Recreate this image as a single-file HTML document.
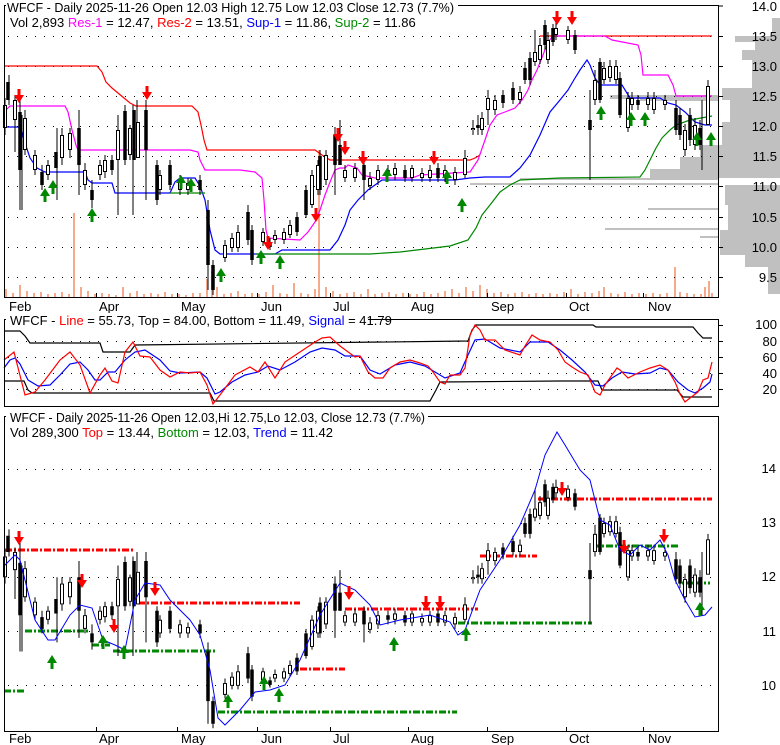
<!DOCTYPE html>
<html><head><meta charset="utf-8"><style>
html,body{margin:0;padding:0;background:#fff;}
svg{display:block;font-family:"Liberation Sans",Arial,sans-serif;font-size:13px;}
</style></head><body>
<svg width="780" height="745" viewBox="0 0 780 745" xmlns="http://www.w3.org/2000/svg">
<defs>
<path id="dn" d="M-1.5,-14 h3 v6 h3.5 l-5,8 l-5,-8 h3.5 z" fill="#f00"/>
<path id="up" d="M-1.5,14 h3 v-6 h3.5 l-5,-8 l-5,8 h3.5 z" fill="#080"/>
<g id="candles">
<path fill="none" stroke="#000" stroke-width="1" d="M20,90V210M22,115V210M57,128V200M79,110V195M118,115V215M133,105V215M137,100V125M146,100V200M208,200V290M213,260V295M335,127V195M340,120V165M364,160V200M590,90V180M702,100V170M708,80V125M5,98V135M9,75V105M15,95V152M25,110V155M35,150V175M42,165V190M48,160V180M62,128V165M70,128V158M85,163V190M92,180V208M100,160V180M105,155V178M112,155V175M125,105V165M130,125V160M157,160V205M160,170V195M170,160V190M180,175V195M188,178V195M200,175V195M225,240V262M232,233V252M238,225V252M248,205V245M252,225V265M263,228V246M270,238V250M275,230V244M284,228V244M290,220V238M297,212V236M306,185V218M312,170V208M318,160V195M320,150V195M326,150V185M345,165V182M355,163V182M370,172V190M378,165V185M388,165V180M395,163V180M405,165V182M412,165V182M422,168V182M430,165V182M438,163V182M445,165V182M455,167V185M465,150V178M473,120V135M478,115V135M482,112V135M488,90V125M495,95V115M503,90V108M513,82V104M520,86V104M525,62V84M530,52V85M535,30V66M540,38V64M545,20V50M548,32V64M553,24V46M556,20V40M568,26V44M575,30V54M595,70V105M600,58V103M604,62V84M610,60V82M616,60V84M620,72V118M628,92V132M632,92V110M638,95V110M648,92V110M654,92V114M665,95V110M676,100V135M680,108V140M685,124V156M690,108V146M695,118V150M700,120V150"/>
<path fill="none" stroke="#000" stroke-width="3.5" d="M8,82V100M20,112V170M42,172V185M56,152V168M79,128V165M92,190V200M112,160V170M125,111V160M134,110V160M146,110V150M157,165V200M170,165V185M200,180V190M208,210V265M213,265V290M248,212V240M252,230V260M270,242V247M297,217V232M306,190V215M320,156V190M335,135V165M340,145V165M364,165V180M388,170V175M405,170V178M438,168V178M478,125V128M503,95V103M513,88V100M525,68V80M530,58V80M545,25V45M553,28V42M575,35V50M590,120V130M600,62V100M620,78V115M638,100V105M676,108V130M680,115V135M690,115V140M700,128V145"/>
<path fill="none" stroke="#000" stroke-width="4" d="M5,105V128M15,100V120M25,118V150M35,155V170M48,165V175M62,135V158M70,133V150M85,170V185M100,165V175M105,160V172M118,130V160M130,128V155M138,122V158M160,175V190M180,180V190M188,183V190M225,245V258M232,238V248M238,232V248M263,232V242M275,235V240M284,232V240M290,225V235M312,175V205M318,165V190M326,155V180M345,170V178M355,168V178M370,178V186M378,170V180M395,168V175M412,168V178M422,173V178M430,170V178M445,170V178M455,172V180M465,158V175M473,128V130M482,118V130M488,98V110M495,100V110M520,92V100M535,52V62M540,45V60M548,40V60M556,28V35M568,30V40M595,80V100M604,68V80M610,66V78M616,66V80M628,98V128M632,98V105M648,98V105M654,98V110M665,100V105M685,130V150M695,125V145M708,86V125"/>
<path fill="none" stroke="#fff" stroke-width="2" d="M5,106V127M15,101V119M25,119V149M35,156V169M48,166V174M62,136V157M70,134V149M85,171V184M100,166V174M105,161V171M118,131V159M130,129V154M138,123V157M160,176V189M180,181V189M188,184V189M225,246V257M232,239V247M238,233V247M263,233V241M275,236V239M284,233V239M290,226V234M312,176V204M318,166V189M326,156V179M345,171V177M355,169V177M370,179V185M378,171V179M395,169V174M412,169V177M422,174V177M430,171V177M445,171V177M455,173V179M465,159V174M473,129V129.5M482,119V129M488,99V109M495,101V109M520,93V99M535,53V61M540,46V59M548,41V59M556,29V34M568,31V39M595,81V99M604,69V79M610,67V77M616,67V79M628,99V127M632,99V104M648,99V104M654,99V109M665,101V104M685,131V149M695,126V144M708,87V124"/>
</g>
</defs>

<!-- ===== PANEL 1 ===== -->
<g>
<!-- volume profile -->
<g fill="#c0c0c0">
<rect x="772" y="18" width="8" height="18"/><rect x="735" y="36" width="45" height="6"/><rect x="755" y="42" width="25" height="8"/><rect x="742" y="50" width="38" height="10"/>
<rect x="752" y="60" width="28" height="28"/><rect x="722" y="88" width="58" height="12"/><rect x="610" y="95" width="109" height="4"/><rect x="640" y="99" width="79" height="2"/>
<rect x="730" y="100" width="50" height="22"/><rect x="722" y="122" width="58" height="23"/><rect x="700" y="145" width="80" height="12"/>
<rect x="680" y="157" width="100" height="12"/><rect x="650" y="169" width="130" height="9"/><rect x="520" y="178" width="199" height="2"/><rect x="470" y="183" width="249" height="2"/>
<rect x="725" y="185" width="55" height="20"/><rect x="648" y="208" width="71" height="2"/><rect x="728" y="205" width="52" height="25"/><rect x="605" y="228" width="114" height="2"/>
<rect x="720" y="230" width="60" height="25"/><rect x="700" y="236" width="19" height="2"/><rect x="745" y="255" width="35" height="12"/><rect x="768" y="267" width="12" height="27"/>
</g>
<!-- volume bars -->
<path fill="none" stroke="#f7a98b" stroke-width="2" d="M6,297v-8M13,297v-4M20,297v-12M27,297v-6M34,297v-4M41,297v-5M48,297v-3M55,297v-4M62,297v-5M69,297v-3M74,297v-84M81,297v-10M88,297v-6M95,297v-3M102,297v-4M109,297v-3M116,297v-2M123,297v-10M130,297v-4M137,297v-6M144,297v-3M151,297v-4M158,297v-3M165,297v-5M172,297v-3M179,297v-3M186,297v-2M193,297v-4M200,297v-4M207,297v-18M212,297v-25M217,297v-10M224,297v-3M231,297v-4M238,297v-6M245,297v-3M252,297v-4M259,297v-3M266,297v-5M273,297v-12M280,297v-4M287,297v-3M294,297v-14M301,297v-4M308,297v-3M315,297v-8M319,297v-147M326,297v-10M333,297v-6M340,297v-3M347,297v-4M354,297v-5M361,297v-3M368,297v-8M375,297v-3M382,297v-4M389,297v-5M396,297v-3M403,297v-4M410,297v-3M417,297v-3M424,297v-5M431,297v-3M438,297v-4M445,297v-6M452,297v-8M459,297v-4M466,297v-10M473,297v-6M480,297v-12M487,297v-8M494,297v-4M501,297v-5M508,297v-3M515,297v-4M522,297v-5M529,297v-3M536,297v-4M543,297v-3M550,297v-4M557,297v-3M564,297v-5M571,297v-8M578,297v-3M585,297v-5M592,297v-4M599,297v-6M604,297v-10M611,297v-4M618,297v-3M625,297v-5M632,297v-3M639,297v-4M646,297v-3M653,297v-4M660,297v-3M667,297v-4M675,297v-30M680,297v-5M687,297v-4M694,297v-3M701,297v-3M705,297v-10M709,297v-16M712,297v-4"/>
<path stroke="#000" stroke-width="1" stroke-dasharray="1,8" fill="none" d="M8,36.5H719M8,66.5H719M8,96.5H719M8,126.5H719M8,156.5H719M8,186.5H719M8,217.5H719M8,247.5H719M8,277.5H719"/>
<polyline fill="none" stroke="#f00" stroke-width="1.2" points="4,66 97,66 102,72 106,82 112,88 118,93 124,98 130,103 136,106 192,106 198,112 201,125 204,140 207,150 315,150 322,155 330,160 340,160 470,160 475,158 480,155"/>
<polyline fill="none" stroke="#f00" stroke-width="1.2" points="540,36 712,36"/>
<polyline fill="none" stroke="#f0f" stroke-width="1.2" points="6,110 10,106 65,106 68,112 72,130 76,145 78,150 190,150 198,152 200,160 205,170 240,170 255,172 262,178 264,200 266,230 268,238 300,240 308,232 315,222 320,210 325,195 330,182 335,170 340,168 345,168 348,165 357,168 362,175 375,178 412,178 420,175 470,172 478,160 485,140 490,125 497,115 505,112 515,108 522,100 528,90 532,80 537,70 543,55 548,42 553,36 605,36 612,40 638,45 641,55 643,75 668,75 673,85 676,96 712,96"/>
<polyline fill="none" stroke="#00f" stroke-width="1.2" points="4,127 21,127 24,140 30,158 37,168 45,172 85,172 88,180 92,183 112,183 115,193 170,193 175,182 180,178 195,178 200,186 205,200 210,230 215,250 220,254 275,254 282,250 330,250 338,240 345,225 350,210 358,200 368,190 375,185 382,180 455,180 470,178 485,177 510,177 520,168 530,155 540,135 550,112 560,100 568,90 575,78 580,70 587,60 590,65 595,78 600,85 622,85 630,98 660,98 668,103 676,105 685,112 695,122 705,125 712,125"/>
<polyline fill="none" stroke="#080" stroke-width="1.2" points="170,193 205,193"/>
<polyline fill="none" stroke="#080" stroke-width="1.2" points="255,254 370,254 400,252 450,246 468,240 476,228 482,215 490,205 500,192 510,185 520,180 560,178 640,177 645,170 650,160 656,148 662,138 670,130 676,125 690,120 712,116"/>
<use href="#candles"/>
<g>
<use href="#dn" x="19" y="103"/><use href="#dn" x="147" y="100"/><use href="#dn" x="268" y="250"/><use href="#dn" x="316" y="222"/><use href="#dn" x="338" y="142"/><use href="#dn" x="345" y="155"/><use href="#dn" x="363" y="165"/><use href="#dn" x="434" y="165"/><use href="#dn" x="557" y="25"/><use href="#dn" x="572" y="25"/>
<use href="#up" x="45" y="188"/><use href="#up" x="53" y="180"/><use href="#up" x="92" y="208"/><use href="#up" x="181" y="175"/><use href="#up" x="191" y="178"/><use href="#up" x="221" y="268"/><use href="#up" x="261" y="250"/><use href="#up" x="280" y="255"/><use href="#up" x="387" y="168"/><use href="#up" x="447" y="170"/><use href="#up" x="462" y="198"/><use href="#up" x="601" y="106"/><use href="#up" x="631" y="112"/><use href="#up" x="645" y="112"/><use href="#up" x="697" y="132"/><use href="#up" x="711" y="132"/>
</g>
<rect x="4.5" y="5.5" width="714" height="292" fill="none" stroke="#000"/>
<rect x="6" y="0" width="452" height="14" fill="#fff"/>
<text x="7" y="12" textLength="447" lengthAdjust="spacingAndGlyphs">WFCF - Daily 2025-11-26 Open 12.03  High 12.75  Low 12.03  Close 12.73 (7.7%)</text>
<text x="10" y="27">Vol 2,893 <tspan fill="#f0f">Res-1</tspan> = 12.47, <tspan fill="#f00">Res-2</tspan> = 13.51, <tspan fill="#00f">Sup-1</tspan> = 11.86, <tspan fill="#080">Sup-2</tspan> = 11.86</text>
<path stroke="#000" d="M719,6h4M719,36.5h4M719,66.5h4M719,96.5h4M719,126.5h4M719,156.5h4M719,186.5h4M719,217.5h4M719,247.5h4M719,277.5h4"/>
<g text-anchor="end">
<text x="777" y="11">14.0</text><text x="777" y="41">13.5</text><text x="777" y="71">13.0</text><text x="777" y="101">12.5</text><text x="777" y="131">12.0</text><text x="777" y="161">11.5</text><text x="777" y="191">11.0</text><text x="777" y="222">10.5</text><text x="777" y="252">10.0</text><text x="777" y="282">9.5</text>
</g>
<path stroke="#000" d="M96.5,298v-5M177.5,298v-5M257.5,298v-5M330.5,298v-5M408.5,298v-5M487.5,298v-5M566.5,298v-5M643.5,298v-5"/>
<g><text x="9" y="311">Feb</text><text x="99" y="311">Apr</text><text x="181" y="311">May</text><text x="261" y="311">Jun</text><text x="333" y="311">Jul</text><text x="411" y="311">Aug</text><text x="491" y="311">Sep</text><text x="569" y="311">Oct</text><text x="648" y="311">Nov</text></g>
</g>

<!-- ===== PANEL 2 ===== -->
<g>
<path stroke="#000" stroke-width="1" stroke-dasharray="1,8" fill="none" d="M8,341.5H719M8,357.5H719M8,373.5H719M8,389.5H719"/>
<polyline fill="none" stroke="#000" stroke-width="1.2" points="4,331 20,331 25,336 30,343 100,343 103,352 130,352 135,345 468,341 472,330 476,325 593,325 596,327 693,327 698,333 703,338 712,338"/>
<polyline fill="none" stroke="#000" stroke-width="1.2" points="4,381 24,381 28,390 32,393 210,393 214,401 430,401 436,390 440,382 560,381 598,381 602,390 677,390 683,397 712,397"/>
<polyline fill="none" stroke="#00f" stroke-width="1.2" points="4,368 10,360 15,358 20,364 28,380 38,386 50,385 60,375 70,364 80,362 88,370 95,380 100,380 108,372 115,372 125,360 135,352 145,350 160,360 170,371 180,373 200,372 207,378 215,394 220,392 232,382 245,375 258,372 268,366 280,370 295,362 310,352 322,348 335,350 345,356 360,356 370,370 380,374 395,365 410,362 425,366 435,372 445,378 460,373 468,355 475,340 485,339 500,348 520,352 530,342 548,342 560,350 572,360 585,372 595,385 603,386 612,378 622,372 635,374 650,373 660,368 668,370 678,382 688,390 695,393 703,388 710,382 712,374"/>
<polyline fill="none" stroke="#f00" stroke-width="1.2" points="4,360 14,352 25,395 35,392 45,380 60,360 70,352 80,365 90,393 100,375 105,368 112,381 118,383 125,352 133,342 140,356 150,357 160,370 170,377 180,372 190,373 200,372 207,385 213,404 220,395 235,375 250,367 258,372 265,362 275,378 285,362 300,352 315,342 322,338 330,337 340,346 355,357 360,356 368,372 375,378 383,378 390,368 400,362 410,360 420,363 428,366 433,372 440,382 445,384 450,375 460,375 465,368 470,335 475,325 480,330 485,340 495,340 505,350 520,355 525,346 532,335 540,340 550,342 558,350 565,362 572,367 580,372 588,375 595,392 600,395 605,385 612,375 617,368 620,370 628,378 640,372 650,368 660,365 668,370 675,382 680,394 685,402 690,398 698,392 703,380 708,378 712,362"/>
<rect x="4.5" y="319.5" width="714" height="87" fill="none" stroke="#000"/>
<rect x="6" y="313" width="362" height="14" fill="#fff"/>
<text x="10" y="325">WFCF - <tspan fill="#f00">Line</tspan> = 55.73, Top = 84.00, Bottom = 11.49, <tspan fill="#00f">Signal</tspan> = 41.79</text>
<path stroke="#000" d="M719,325.5h4M719,341.5h4M719,357.5h4M719,373.5h4M719,389.5h4"/>
<g text-anchor="end"><text x="777" y="329">100</text><text x="777" y="346">80</text><text x="777" y="362">60</text><text x="777" y="378">40</text><text x="777" y="394">20</text></g>
</g>

<!-- ===== PANEL 3 ===== -->
<g>
<path stroke="#000" stroke-width="1" stroke-dasharray="1,8" fill="none" d="M8,469.5H719M8,523.5H719M8,577.5H719M8,631.5H719M8,685.5H719"/>
<g stroke-width="3" stroke-dasharray="7,2,2,2" fill="none">
<path stroke="#f00" d="M5,550H135M138,603H300M300,669H345M345,609H478M480,556H537M538,499H712"/>
<path stroke="#080" d="M4,691H25M25,631H88M92,645H110M113,651H215M218,712H457M458,623H592M593,546H680M682,583H710"/>
</g>
<g transform="translate(0,461.6) scale(1,0.904)"><use href="#candles"/></g>
<polyline fill="none" stroke="#00f" stroke-width="1" points="4,566 15,555 20,560 35,620 48,640 55,640 70,615 80,605 92,608 103,640 115,645 125,650 135,600 145,583 160,585 170,600 180,610 190,620 200,635 210,670 218,718 225,725 240,710 255,692 270,690 285,685 300,660 320,615 340,583 355,590 370,605 380,625 400,620 430,615 450,622 458,635 465,630 480,590 500,560 520,525 535,490 545,455 557,432 565,445 580,470 590,480 600,520 610,525 620,550 630,555 640,545 650,550 660,540 668,555 675,580 685,600 695,617 705,615 712,607"/>
<g>
<use href="#dn" x="19" y="545"/><use href="#dn" x="82" y="588"/><use href="#dn" x="114" y="633"/><use href="#dn" x="155" y="596"/><use href="#dn" x="349" y="600"/><use href="#dn" x="426" y="610"/><use href="#dn" x="440" y="610"/><use href="#dn" x="562" y="496"/><use href="#dn" x="624" y="554"/><use href="#dn" x="664" y="543"/>
<use href="#up" x="52" y="655"/><use href="#up" x="103" y="635"/><use href="#up" x="124" y="645"/><use href="#up" x="228" y="694"/><use href="#up" x="264" y="676"/><use href="#up" x="279" y="688"/><use href="#up" x="394" y="637"/><use href="#up" x="466" y="627"/><use href="#up" x="700" y="602"/>
</g>
<rect x="4.5" y="416.5" width="714" height="315" fill="none" stroke="#000"/>
<rect x="6" y="410" width="422" height="14" fill="#fff"/>
<text x="10" y="422" textLength="415" lengthAdjust="spacingAndGlyphs">WFCF - Daily 2025-11-26 Open 12.03,Hi 12.75,Lo 12.03, Close 12.73 (7.7%)</text>
<text x="10" y="437">Vol 289,300 <tspan fill="#f00">Top</tspan> = 13.44, <tspan fill="#080">Bottom</tspan> = 12.03, <tspan fill="#00f">Trend</tspan> = 11.42</text>
<g text-anchor="end"><text x="776" y="473">14</text><text x="776" y="527">13</text><text x="776" y="581">12</text><text x="776" y="636">11</text><text x="776" y="690">10</text></g>
<path stroke="#000" d="M96.5,732v-5M177.5,732v-5M257.5,732v-5M330.5,732v-5M408.5,732v-5M487.5,732v-5M566.5,732v-5M643.5,732v-5"/>
<g><text x="9" y="743">Feb</text><text x="99" y="743">Apr</text><text x="181" y="743">May</text><text x="261" y="743">Jun</text><text x="333" y="743">Jul</text><text x="411" y="743">Aug</text><text x="491" y="743">Sep</text><text x="569" y="743">Oct</text><text x="648" y="743">Nov</text></g>
</g>
</svg>
</body></html>
